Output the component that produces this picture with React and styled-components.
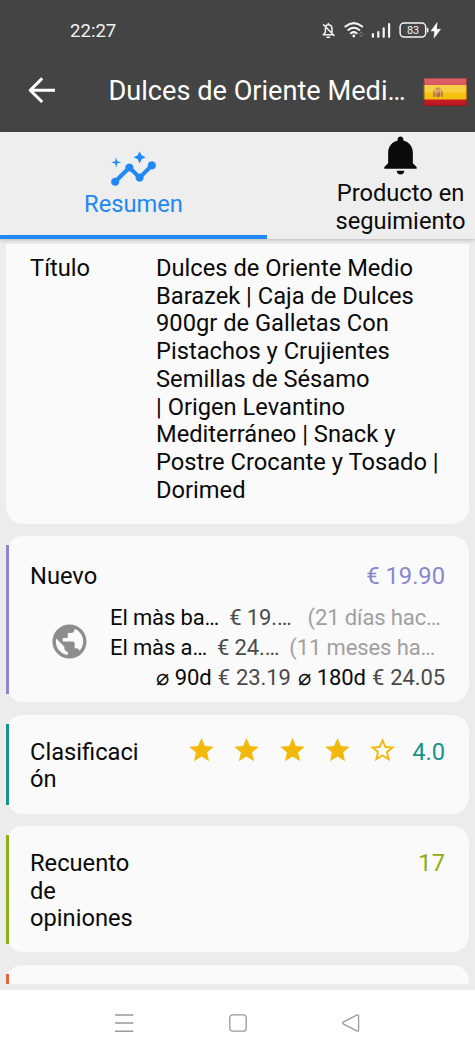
import React from "react";
import styled, { createGlobalStyle } from "styled-components";
import { MdInsights, MdPublic } from "react-icons/md";
import { IoMdNotifications, IoMdStar, IoMdStarOutline } from "react-icons/io";


//styledComponents
const GlobalStyle = createGlobalStyle`
    * {
        box-sizing: border-box;
    }
    body {
        margin: 0;
        background: #fff;
        font-family: Roboto, "Liberation Sans", sans-serif;
        color: #0a0a0a;
    }
`
const StyledPage = styled.div`
    width: 475px;
    height: 1056px;
    display: flex;
    flex-direction: column;
    overflow: hidden;
    background: #ececec;
`
const StyledHeader = styled.header`
    height: 131.5px;
    flex: none;
    background: #444;
    color: #fff;
`
const StyledStatus = styled.div`
    height: 60px;
    padding: 0 34px 0 70px;
    display: flex;
    align-items: center;
    justify-content: space-between;
`
const StyledTime = styled.span`
    padding-top: 1px;
    font-size: 18.6px;
    color: #f2f2f2;
`
const StyledTitleBar = styled.div`
    height: 62px;
    padding: 0 8px 0 27px;
    display: flex;
    align-items: center;
`
const StyledTitle = styled.h1`
    margin: 1px 0 0 52.5px;
    flex: 1;
    font-size: 27.15px;
    line-height: 33px;
    font-weight: 400;
    white-space: nowrap;
`
const StyledTabs = styled.nav`
    position: relative;
    z-index: 1;
    height: 107px;
    flex: none;
    display: flex;
    background: #eee;
    box-shadow: 0 1px 4px rgba(0, 0, 0, 0.22);
`
const StyledTab = styled.div`
    width: 267px;
    flex: none;
    padding-top: ${props => props.$top};
    display: flex;
    flex-direction: column;
    align-items: center;
    font-size: 23.7px;
    line-height: 27.75px;
    text-align: center;
    color: ${props => props.$active ? "#2189f3" : "#0a0a0a"};
    border-bottom: 4px solid ${props => props.$active ? "#2189f3" : "transparent"};
    svg {
        flex: none;
    }
`
const StyledTabLabel = styled.span`
    margin-top: ${props => props.$shift};
`
const StyledList = styled.main`
    height: 740px;
    margin: 5.5px 0 6px;
    flex: none;
    padding: 0 6px;
    display: flex;
    flex-direction: column;
    gap: 12.7px;
    overflow: hidden;
`
const StyledCard = styled.section`
    position: relative;
    height: ${props => props.$height};
    flex: none;
    padding: ${props => props.$top} 24px 0;
    background: #fafafa;
    border-radius: ${props => props.$radius || "17px"};
    font-size: 23.7px;
    line-height: 27.75px;
`
const StyledStripe = styled.span`
    position: absolute;
    top: 8.5px;
    bottom: ${props => props.$bottom || "8.5px"};
    left: 0;
    width: 3px;
    background: ${props => props.$color};
`
const StyledRow = styled.div`
    display: flex;
    justify-content: space-between;
`
const StyledLabel = styled.div`
    width: ${props => props.$width || "126px"};
    flex: none;
    word-break: ${props => props.$breakAll ? "break-all" : "normal"};
`
const StyledText = styled.div`
    flex: 1;
    white-space: pre-line;
`
const StyledValue = styled.div`
    color: ${props => props.$color};
`
const StyledPrices = styled.div`
    margin-top: 12px;
    display: flex;
    align-items: flex-start;
`
const StyledGlobe = styled.div`
    width: 80px;
    padding: 18px 0 0 19px;
    display: flex;
    flex: none;
    color: #8d8d8d;
`
const StyledLines = styled.div`
    flex: 1;
    min-width: 0;
    font-size: 22px;
    line-height: 30px;
    letter-spacing: -0.12px;
    white-space: nowrap;
`
const StyledLine = styled.div`
    display: flex;
    justify-content: ${props => props.$end ? "flex-end" : "flex-start"};
    gap: ${props => props.$gap};
    word-spacing: ${props => props.$end ? "0.8px" : "0"};
`
const StyledPrice = styled.span`
    color: #4a4a4a;
`
const StyledAgo = styled.span`
    margin-left: ${props => props.$space};
    color: #a0a0a0;
`
const StyledStars = styled.div`
    height: 22px;
    margin-left: auto;
    margin-right: 14px;
    display: flex;
    align-items: center;
    gap: 14.3px;
    color: #f2b90c;
`
const StyledNav = styled.footer`
    flex: 1;
    padding: 0 114px;
    display: flex;
    justify-content: space-between;
    align-items: center;
    background: #fff;
`


function StatusIcons(){
    return(
        <svg width="120" height="20" viewBox="321 20 120 20" fill="none" stroke="#f4f4f4" strokeLinecap="round" strokeLinejoin="round">
            <path d="M325.4 28.3V32.2L323.3 34.8H333.6M332 32V29Q332 24.8 328.3 24.8Q327 24.8 326.2 25.6M328.3 23.6V24.4M323.6 24.7L334 35.5M327 37.3H329.6" strokeWidth="1.5" />
            <path d="M345.4 26.6Q353.8 19.7 362.2 26.6M348.3 30Q353.8 25.6 359.3 30M350.9 33.2Q353.8 31 356.7 33.2" strokeWidth="2" />
            <circle cx="353.8" cy="36" r="1.4" fill="#f4f4f4" stroke="none" />
            <path d="M359.8 33.4L361.3 32L362.8 33.4M359.8 35L361.3 36.5L362.8 35" stroke="#8b8b8b" strokeWidth="0.9" />
            <path d="M372.9 34V36.8M378.3 32V36.8M383.7 28.4V36.8M389.1 24V36.8" strokeWidth="2.2" />
            <rect x="400.1" y="23.1" width="25.6" height="14" rx="4" strokeWidth="1.5" />
            <path d="M427.7 28.5V31.8" strokeWidth="1.4" />
            <text x="413" y="33.9" textAnchor="middle" fontSize="10.8" fill="#f4f4f4" stroke="none">83</text>
            <path d="M437 22.8L431 31H434.6L434 38L440.6 29.2H436.7Z" fill="#fff" stroke="#fff" strokeWidth="0.5" />
        </svg>
    )
}

function BackArrow(){
    return(
        <svg width="29" height="30" viewBox="0 0 29 30" fill="none" stroke="#fff" strokeWidth="3" strokeLinejoin="round">
            <path d="M15.2 2.4L3.2 14.2L15.2 26M3 14.2H28" />
        </svg>
    )
}

function SpainFlag(){
    return(
        <svg width="44" height="32" viewBox="0 -2 44 32">
            <defs>
                <linearGradient id="shine" x1="0" y1="0" x2="0" y2="1">
                    <stop offset="0" stopColor="#fff" stopOpacity="0.34" />
                    <stop offset="0.5" stopColor="#fff" stopOpacity="0.2" />
                    <stop offset="0.56" stopColor="#fff" stopOpacity="0" />
                    <stop offset="1" stopColor="#000" stopOpacity="0.1" />
                </linearGradient>
            </defs>
            <rect x="0.8" y="1" width="43" height="28" rx="1" fill="#cc1620" />
            <rect x="0.8" y="8" width="43" height="14.5" fill="#f5c10a" />
            <g fill="#b87045">
                <rect x="10.2" y="13.5" width="1.7" height="6.5" />
                <rect x="18.1" y="13.5" width="1.7" height="6.5" />
                <path d="M12.6 13.7H17.4V18.3Q17.4 20.2 15 20.2Q12.6 20.2 12.6 18.3Z" />
                <path d="M12.6 13L12.2 11.3Q15 9.4 17.8 11.3L17.4 13Z" />
            </g>
            <rect x="13.4" y="14.9" width="1.5" height="1.8" fill="#d9a59a" />
            <rect x="15.4" y="17.1" width="1.4" height="1.5" fill="#8a6070" />
            <rect x="0.8" y="1" width="43" height="28" rx="1" fill="url(#shine)" />
            <rect x="1.3" y="1.5" width="42" height="27" rx="0.7" fill="none" stroke="#5a2020" strokeOpacity="0.4" />
        </svg>
    )
}

function PriceLine({label, price, ago, gap, space}){
    return(
        <StyledLine $gap={gap}>
            <span>{label}</span>
            <StyledPrice>{price}</StyledPrice>
            <StyledAgo $space={space}>{ago}</StyledAgo>
        </StyledLine>
    )
}

const title = `Dulces de Oriente Medio
Barazek | Caja de Dulces
900gr de Galletas Con
Pistachos y Crujientes
Semillas de Sésamo
| Origen Levantino
Mediterráneo | Snack y
Postre Crocante y Tosado |
Dorimed`

export default function App(){
    return(
        <StyledPage>
            <GlobalStyle />
            <StyledHeader>
                <StyledStatus>
                    <StyledTime>22:27</StyledTime>
                    <StatusIcons />
                </StyledStatus>
                <StyledTitleBar>
                    <BackArrow />
                    <StyledTitle>Dulces de Oriente Medi…</StyledTitle>
                    <SpainFlag />
                </StyledTitleBar>
            </StyledHeader>
            <StyledTabs>
                <StyledTab $active $top="13px">
                    <MdInsights size={49} />
                    <StyledTabLabel $shift="-3px">Resumen</StyledTabLabel>
                </StyledTab>
                <StyledTab $top="0">
                    <IoMdNotifications size={47} />
                    <StyledTabLabel $shift="1.3px">Producto en<br />seguimiento</StyledTabLabel>
                </StyledTab>
            </StyledTabs>
            <StyledList>
                <StyledCard $height="279.5px" $top="10.8px" $radius="0 0 17px 17px">
                    <StyledRow>
                        <StyledLabel>Título</StyledLabel>
                        <StyledText>{title}</StyledText>
                    </StyledRow>
                </StyledCard>
                <StyledCard $height="166.3px" $top="26.7px">
                    <StyledStripe $color="#8b86ce" />
                    <StyledRow>
                        <StyledLabel>Nuevo</StyledLabel>
                        <StyledValue $color="#8b86ce">€ 19.90</StyledValue>
                    </StyledRow>
                    <StyledPrices>
                        <StyledGlobe><MdPublic size={41} /></StyledGlobe>
                        <StyledLines>
                            <PriceLine label="El màs ba…" price="€ 19.…" ago="(21 días hac…" gap="10px" space="6px" />
                            <PriceLine label="El màs a…" price="€ 24.…" ago="(11 meses ha…" gap="10px" space="0" />
                            <StyledLine $end $gap="7px">
                                <span>⌀ 90d <StyledPrice>€ 23.19</StyledPrice></span>
                                <span>⌀ 180d <StyledPrice>€ 24.05</StyledPrice></span>
                            </StyledLine>
                        </StyledLines>
                    </StyledPrices>
                </StyledCard>
                <StyledCard $height="98.5px" $top="23.5px">
                    <StyledStripe $color="#159588" />
                    <StyledRow>
                        <StyledLabel $width="112px" $breakAll>Clasificación</StyledLabel>
                        <StyledStars>
                            {[1, 2, 3, 4].map(star => <IoMdStar key={star} size={31} />)}
                            <IoMdStarOutline size={31} />
                        </StyledStars>
                        <StyledValue $color="#159588">4.0</StyledValue>
                    </StyledRow>
                </StyledCard>
                <StyledCard $height="126px" $top="23.5px">
                    <StyledStripe $color="#8cb010" />
                    <StyledRow>
                        <StyledLabel $width="112px">Recuento de opiniones</StyledLabel>
                        <StyledValue $color="#8cb010">17</StyledValue>
                    </StyledRow>
                </StyledCard>
                <StyledCard $height="19.5px" $top="0" $radius="17px 17px 0 0">
                    <StyledStripe $color="#e2643c" $bottom="0" />
                </StyledCard>
            </StyledList>
            <StyledNav>
                <svg width="20" height="20" viewBox="0 0 20 20" stroke="#999" strokeWidth="1.4">
                    <path d="M1 2H19.3M1 10H19.3M1 18.3H19.3" />
                </svg>
                <svg width="20" height="20" viewBox="0 0 20 20" fill="none" stroke="#999" strokeWidth="1.3">
                    <rect x="1.8" y="1.8" width="16.4" height="16.4" rx="3" />
                </svg>
                <svg width="20" height="20" viewBox="0 0 20 20" fill="none" stroke="#999" strokeWidth="1.3" strokeLinejoin="round">
                    <path d="M2.2 9.2L15.6 2.2Q17.6 1.4 17.6 3.4V16.6Q17.6 18.6 15.6 17.8L2.2 10.8Q1 10 2.2 9.2Z" />
                </svg>
            </StyledNav>
        </StyledPage>
    )
}
